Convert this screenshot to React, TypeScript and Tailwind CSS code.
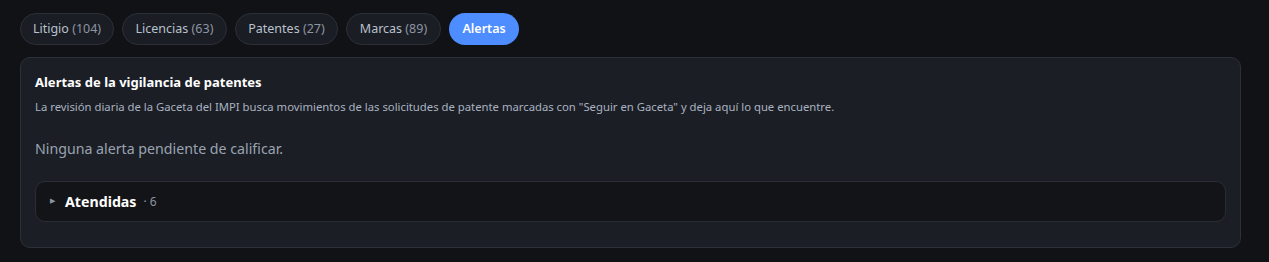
import { useState } from "react"

const tabs = [
  { label: "Litigio", count: 104, w: "w-[94px]" },
  { label: "Licencias", count: 63, w: "w-[105px]" },
  { label: "Patentes", count: 27, w: "w-[103px]" },
  { label: "Marcas", count: 89, w: "w-[95px]" },
  { label: "Alertas", count: null, w: "w-[70px]" },
]

export default function App() {
  const [active, setActive] = useState("Alertas")

  return (
    <div className="min-h-[262px] bg-[#111216] pl-5 pr-[28px] pt-[13px] font-['Noto_Sans',sans-serif]">
      <div className="flex items-center gap-[8px]">
        {tabs.map((t) =>
          t.label === active ? (
            <button
              key={t.label}
              onClick={() => setActive(t.label)}
              className={`${t.w} h-[32px] rounded-full bg-[#4d8dff] text-[12.5px] font-semibold text-white`}
            >
              {t.label}
            </button>
          ) : (
            <button
              key={t.label}
              onClick={() => setActive(t.label)}
              className={`${t.w} h-[32px] rounded-full border border-[#2b2f38] bg-[#1a1d24] text-[12.5px] text-[#b9c1cd]`}
            >
              {t.label} <span className="text-[#8d95a2]">({t.count})</span>
            </button>
          )
        )}
      </div>

      <div className="mt-[12px] rounded-[10px] border border-[#2c3038] bg-[#1b1e25] px-[14px] pt-[14px] pb-[25px]">
        <h3 className="text-[13px] font-bold leading-[20px] text-white">
          Alertas de la vigilancia de patentes
        </h3>
        <p className="mt-[6px] text-[11.3px] leading-[18px] text-[#a9b2c0]">
          La revisión diaria de la Gaceta del IMPI busca movimientos de las solicitudes de patente marcadas con "Seguir en Gaceta" y deja aquí lo que encuentre.
        </p>
        <p className="mt-[23px] text-[14.2px] leading-[20px] text-[#9aa3b1]">
          Ninguna alerta pendiente de calificar.
        </p>
        <details className="mt-[22px] rounded-[10px] border border-[#2a2d35] bg-[#131418]">
          <summary className="flex h-[39px] cursor-pointer list-none items-center pl-[14px]">
            <span className="mr-[10px] text-[7px] text-[#8d95a2]">▶</span>
            <span className="text-[14.2px] font-bold text-white">Atendidas</span>
            <span className="ml-[7px] text-[12px] text-[#8d95a2]">· 6</span>
          </summary>
        </details>
      </div>
    </div>
  )
}
